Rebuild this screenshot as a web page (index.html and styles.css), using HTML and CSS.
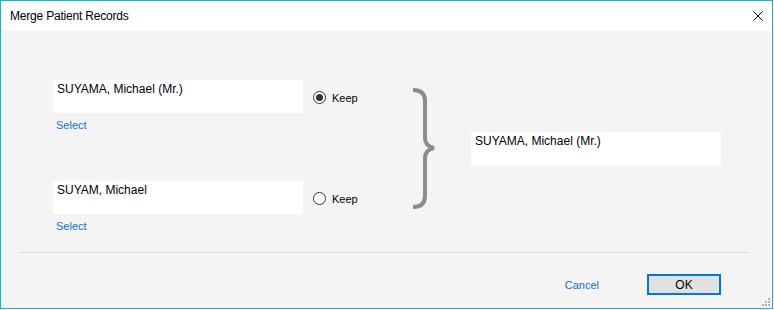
FILE: index.html
```html
<!DOCTYPE html>
<html lang="en">
  <head>
    <meta charset="UTF-8" />
    <title>Merge Patient Records</title>
    <link rel="stylesheet" href="styles.css">
  </head>
  <body>
    <div class="window">
      <div class="titlebar">
        <span class="title">Merge Patient Records</span>
        <svg class="close" width="10" height="10" viewBox="0 0 10 10">
          <path d="M0.5 0.5 L9.5 9.5 M9.5 0.5 L0.5 9.5" stroke="#000" stroke-width="1" fill="none" />
        </svg>
      </div>

      <div class="main">
        <div class="sources">
          <div class="source">
            <div class="record">SUYAMA, Michael (Mr.)</div>
            <div class="radio">
              <span class="dot checked"></span>
              <span>Keep</span>
            </div>
            <a class="select" href="#">Select</a>
          </div>
          <div class="source">
            <div class="record">SUYAM, Michael</div>
            <div class="radio">
              <span class="dot"></span>
              <span>Keep</span>
            </div>
            <a class="select" href="#">Select</a>
          </div>
        </div>

        <svg class="brace" width="24" height="122" viewBox="0 0 24 122">
          <path d="M0 2 Q12 2 12 13 L12 50 Q12 58 21 60 Q12 62 12 70 L12 108 Q12 119 0 119"
            stroke="#8c8c8c" stroke-width="4" fill="none" />
        </svg>

        <div class="record result">SUYAMA, Michael (Mr.)</div>
      </div>

      <div class="divider"></div>

      <div class="footer">
        <a class="cancel" href="#">Cancel</a>
        <button class="ok">OK</button>
      </div>

      <div class="grip">
        <span></span><span></span><span></span>
        <span></span><span></span><span></span>
      </div>
    </div>
  </body>
</html>
```

FILE: styles.css
```css
body {
  margin: 0;
  background: #ffffff;
  font-family: "Liberation Sans", Arial, sans-serif;
  font-size: 12px;
  color: #000;
}
.window {
  position: relative;
  box-sizing: border-box;
  width: 773px;
  height: 309px;
  border: 1px solid #18b4c8;
  background: #f4f4f4;
}
.titlebar {
  display: flex;
  align-items: center;
  justify-content: space-between;
  height: 30px;
  padding-left: 9px;
  padding-right: 9px;
  background: #ffffff;
}
.title {
  font-size: 12px;
  letter-spacing: -0.2px;
}
.close {
  display: block;
}
.main {
  display: flex;
  align-items: flex-start;
  padding: 49px 0 0 52px;
}
.sources {
  display: flex;
  flex-direction: column;
  gap: 48px;
}
.source {
  display: grid;
  grid-template-columns: 250px 100px;
  column-gap: 10px;
}
.record {
  box-sizing: border-box;
  height: 33px;
  padding: 3px 4px;
  line-height: 13px;
  background: #ffffff;
}
.radio {
  display: flex;
  align-items: center;
  gap: 6px;
  margin-top: 2px;
  font-size: 11px;
}
.dot {
  box-sizing: border-box;
  width: 13px;
  height: 13px;
  border: 1px solid #333;
  border-radius: 50%;
  background: #fff;
  display: flex;
  align-items: center;
  justify-content: center;
}
.dot.checked::after {
  content: "";
  width: 7px;
  height: 7px;
  border-radius: 50%;
  background: #333;
}
.select {
  display: block;
  justify-self: start;
  margin: 5px 0 0 3px;
  line-height: 15px;
  height: 15px;
  font-size: 11px;
  color: #1570d0;
  text-decoration: none;
}
.brace {
  display: block;
  margin-top: 8px;
}
.result {
  width: 250px;
  margin-top: 52px;
  margin-left: 34px;
}
.divider {
  height: 1px;
  width: 730px;
  margin: 18px 0 0 18px;
  background: #d8d8d8;
}
.footer {
  display: flex;
  justify-content: flex-end;
  align-items: center;
  gap: 48px;
  margin-top: 21px;
  padding-right: 51px;
}
.cancel {
  font-size: 11px;
  color: #1570d0;
  text-decoration: none;
}
.ok {
  box-sizing: border-box;
  width: 74px;
  height: 21px;
  padding: 0;
  border: 2px solid #0078d7;
  background: #e1e1e1;
  font-family: "Liberation Sans", Arial, sans-serif;
  font-size: 12px;
  color: #000;
}
.grip {
  position: absolute;
  right: 2px;
  bottom: 2px;
  display: grid;
  grid-template-columns: repeat(3, 2px);
  grid-template-rows: repeat(3, 2px);
  gap: 1px;
}
.grip span {
  background: #b3b3b3;
}
.grip span:nth-child(1) {
  grid-area: 1 / 3;
}
.grip span:nth-child(2) {
  grid-area: 2 / 2;
}
.grip span:nth-child(3) {
  grid-area: 2 / 3;
}
.grip span:nth-child(4) {
  grid-area: 3 / 1;
}
.grip span:nth-child(5) {
  grid-area: 3 / 2;
}
.grip span:nth-child(6) {
  grid-area: 3 / 3;
}
```
